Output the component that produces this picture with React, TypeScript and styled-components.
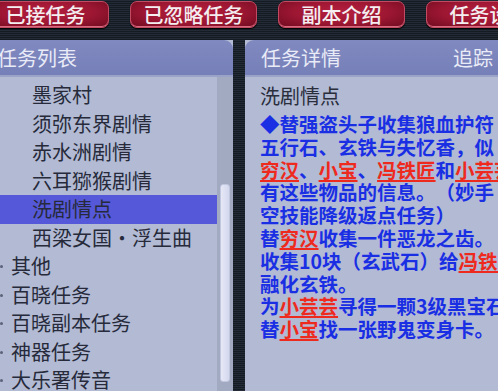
import styled, { createGlobalStyle } from "styled-components";

const GlobalStyle = createGlobalStyle`
  html, body {
    margin: 0;
    padding: 0;
    background: #1b222c;
  }
  * {
    box-sizing: border-box;
  }
`;

const tabs = ["已接任务", "已忽略任务", "副本介绍", "任务设置"];

type ListItem = { label: string; child?: boolean; active?: boolean };

const items: ListItem[] = [
  { label: "墨家村", child: true },
  { label: "须弥东界剧情", child: true },
  { label: "赤水洲剧情", child: true },
  { label: "六耳猕猴剧情", child: true },
  { label: "洗剧情点", child: true, active: true },
  { label: "西梁女国・浮生曲", child: true },
  { label: "其他" },
  { label: "百晓任务" },
  { label: "百晓副本任务" },
  { label: "神器任务" },
  { label: "大乐署传音" },
];

// each line is a list of [text, isName]
const detail: [string, boolean][][] = [
  [["◆替强盗头子收集狼血护符", false]],
  [["五行石、玄铁与失忆香，似", false]],
  [
    ["穷汉", true],
    ["、", false],
    ["小宝", true],
    ["、", false],
    ["冯铁匠", true],
    ["和", false],
    ["小芸芸", true],
  ],
  [["有这些物品的信息。（妙手", false]],
  [["空技能降级返点任务）", false]],
  [
    ["替", false],
    ["穷汉", true],
    ["收集一件恶龙之齿。", false],
  ],
  [
    ["收集10块（玄武石）给", false],
    ["冯铁匠", true],
  ],
  [["融化玄铁。", false]],
  [
    ["为", false],
    ["小芸芸", true],
    ["寻得一颗3级黑宝石", false],
  ],
  [
    ["替", false],
    ["小宝", true],
    ["找一张野鬼变身卡。", false],
  ],
];

export default function App() {
  return (
    <Page>
      <GlobalStyle />
      <TabBar>
        {tabs.map((t) => (
          <Tab key={t}>{t}</Tab>
        ))}
      </TabBar>
      <Panels>
        <LeftPanel>
          <PanelHeader $corner="right">
            <HeaderTitle $offset={-3}>任务列表</HeaderTitle>
          </PanelHeader>
          <ListArea>
            <List>
              {items.map((it) => (
                <Row key={it.label} $child={it.child} $active={it.active}>
                  {it.label}
                </Row>
              ))}
            </List>
            <ScrollTrack>
              <ScrollThumb />
            </ScrollTrack>
          </ListArea>
        </LeftPanel>
        <Divider />
        <RightPanel>
          <PanelHeader $corner="left">
            <HeaderTitle $offset={16}>任务详情</HeaderTitle>
            <HeaderAction>追踪</HeaderAction>
          </PanelHeader>
          <DetailBody>
            <DetailTitle>洗剧情点</DetailTitle>
            {detail.map((line, i) => (
              <DetailLine key={i}>
                {line.map(([text, isName], j) =>
                  isName ? <Name key={j}>{text}</Name> : <span key={j}>{text}</span>
                )}
              </DetailLine>
            ))}
          </DetailBody>
        </RightPanel>
      </Panels>
    </Page>
  );
}

const stripes = `repeating-linear-gradient(
  to bottom,
  #222b36 0px,
  #222b36 1px,
  #151b23 1px,
  #151b23 2px
)`;

const Page = styled.div`
  width: 498px;
  height: 391px;
  overflow: hidden;
  display: flex;
  flex-direction: column;
  background: ${stripes};
  font-family: "Noto Sans CJK SC", "Noto Sans", sans-serif;
  text-spacing-trim: space-all;
`;

const TabBar = styled.div`
  display: flex;
  gap: 21px;
  height: 40px;
  padding-top: 1px;
  margin-left: -18px;
  flex-shrink: 0;
`;

const Tab = styled.div`
  flex: 0 0 127px;
  height: 27px;
  display: flex;
  align-items: center;
  justify-content: center;
  border-radius: 7px;
  border: 1px solid #c24a62;
  background: radial-gradient(
    ellipse at 50% 40%,
    #b51f3f 0%,
    #9c1632 55%,
    #6e0b1f 100%
  );
  box-shadow: inset 0 -1px 0 #d86a80, 0 1px 1px #000;
  color: #f4eef0;
  font-size: 20px;
  font-weight: 500;
  white-space: nowrap;
`;

const Panels = styled.div`
  flex: 1;
  display: flex;
  min-height: 0;
`;

const LeftPanel = styled.div`
  width: 233px;
  display: flex;
  flex-direction: column;
  background: #b2bad4;
`;

const RightPanel = styled.div`
  flex: 1;
  display: flex;
  flex-direction: column;
  background: #b2bad4;
  min-width: 0;
`;

const Divider = styled.div`
  width: 12px;
  background: ${stripes};
`;

const PanelHeader = styled.div<{ $corner: "left" | "right" }>`
  height: 37px;
  flex-shrink: 0;
  display: flex;
  align-items: center;
  justify-content: space-between;
  background: linear-gradient(to bottom, #8089c0, #7680b8);
  border-bottom: 2px solid #9aa2c8;
  border-top-${(p) => p.$corner}-radius: 9px;
  color: #e9ebf7;
  font-size: 20px;
  padding-right: 5px;
`;

const HeaderTitle = styled.span<{ $offset: number }>`
  margin-left: ${(p) => p.$offset}px;
  white-space: nowrap;
`;

const HeaderAction = styled.span`
  white-space: nowrap;
`;

const ListArea = styled.div`
  flex: 1;
  display: flex;
  min-height: 0;
`;

const List = styled.div`
  flex: 1;
  padding-top: 4px;
  overflow: hidden;
`;

const Row = styled.div<{ $child?: boolean; $active?: boolean }>`
  position: relative;
  height: 28.5px;
  line-height: 28.5px;
  padding-left: ${(p) => (p.$child ? 32 : 11)}px;
  font-size: 20px;
  color: #262a3a;
  white-space: nowrap;
  background: ${(p) => (p.$active ? "#5558d8" : "transparent")};

  &::before {
    content: "";
    display: ${(p) => (p.$child ? "none" : "block")};
    position: absolute;
    left: 0;
    top: 13px;
    width: 3px;
    height: 3px;
    border-radius: 50%;
    background: #5c6278;
  }
`;

const ScrollTrack = styled.div`
  width: 16px;
  background: #a2aac2;
  padding: 107px 3px 6px 3px;
`;

const ScrollThumb = styled.div`
  height: 198px;
  border-radius: 3px;
  background: linear-gradient(to right, #e6e8f6, #d4d8ee);
  border: 1px solid #c2c7e0;
`;

const DetailBody = styled.div`
  flex: 1;
  padding: 5px 0 0 15px;
  overflow: hidden;
`;

const DetailTitle = styled.div`
  height: 28px;
  line-height: 28px;
  margin-bottom: 3px;
  font-size: 20px;
  color: #2a2e3c;
  white-space: nowrap;
`;

const DetailLine = styled.div`
  height: 22.8px;
  line-height: 22.8px;
  font-size: 19.5px;
  font-weight: 700;
  color: #1a2fe4;
  white-space: nowrap;
`;

const Name = styled.span`
  color: #ee2a1e;
  text-decoration: underline;
  text-decoration-thickness: 2px;
  text-underline-offset: 2px;
`;
